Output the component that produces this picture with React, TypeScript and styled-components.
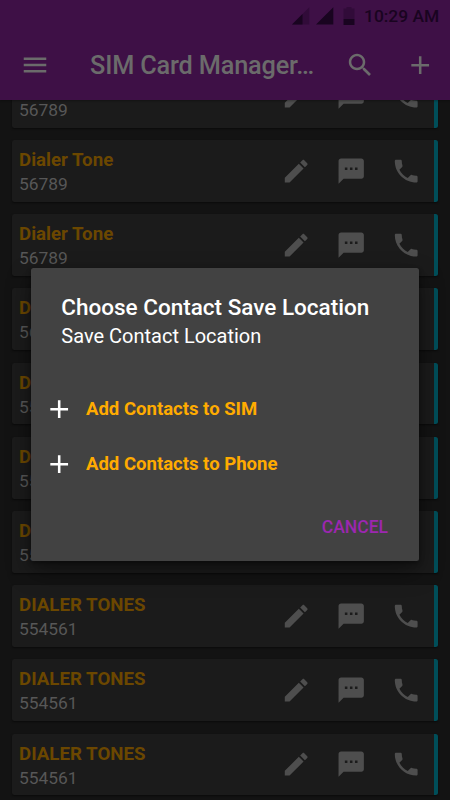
import React from "react";
import styled, { createGlobalStyle } from "styled-components";

const GlobalStyle = createGlobalStyle`
  * { box-sizing: border-box; }
  body { margin: 0; background: #131313; font-family: Roboto, "Liberation Sans", sans-serif; }
`;

const Screen = styled.div`
  position: relative;
  width: 450px;
  height: 800px;
  overflow: hidden;
  display: flex;
  flex-direction: column;
  background: #131313;
`;

const Header = styled.header`
  position: relative;
  z-index: 1;
  flex: 0 0 100px;
  background: #3e1046;
  box-shadow: 0 1px 2px rgba(0, 0, 0, 0.3);
`;

const StatusBar = styled.div`
  display: flex;
  align-items: center;
  height: 31px;
  padding-left: 291.5px;
  color: #190420;
`;

const StatusIcon = styled.svg<{ $gap: number }>`
  flex: none;
  margin-right: ${(p) => p.$gap}px;
`;

const Clock = styled.span`
  font-size: 17.4px;
  font-weight: 500;
  line-height: 20px;
  white-space: nowrap;
`;

const Toolbar = styled.div`
  display: flex;
  align-items: center;
  height: 68px;
  padding: 0 15px 0 20px;
  color: #6b6b6b;
`;

const Title = styled.h1`
  flex: 0 0 254px;
  margin: 0;
  padding: 1px 0 0 40px;
  font-size: 25.3px;
  font-weight: 500;
  letter-spacing: -0.17px;
  line-height: 32px;
  white-space: nowrap;
`;

const ToolGap = styled.span<{ $width: number }>`
  flex: 0 0 ${(p) => p.$width}px;
`;

const List = styled.main`
  flex: 1;
  display: flex;
  flex-direction: column;
  gap: 12.4px;
  margin-top: -34.2px;
  padding: 0 12.4px;
`;

const Card = styled.article`
  flex: 0 0 61.8px;
  display: flex;
  align-items: flex-start;
  padding-left: 6.6px;
  background: #1b1b1b;
  border-right: 4px solid #004e59;
  border-radius: 2.5px;
  box-shadow: 0 1px 2px rgba(0, 0, 0, 0.5);
`;

const Details = styled.div`
  flex: 1;
  padding-top: 9px;
`;

const Name = styled.div`
  color: #6b4700;
  font-size: 18.7px;
  font-weight: 700;
  line-height: 22px;
`;

const PhoneNumber = styled.div`
  margin-top: 3px;
  color: #575757;
  font-size: 17.4px;
  line-height: 21px;
`;

const Actions = styled.div`
  display: flex;
  gap: 24.6px;
  padding: 15.5px 12px 0 0;
  color: #4e4e4e;
`;

const Glyph = styled.svg`
  display: block;
  flex: none;
  fill: currentColor;
`;

const Dialog = styled.section`
  position: absolute;
  z-index: 2;
  left: 31px;
  top: 268px;
  width: 387.5px;
  height: 293.3px;
  display: flex;
  flex-direction: column;
  background: #424242;
  border-radius: 2.5px;
  box-shadow: 0 10px 24px rgba(0, 0, 0, 0.42), 0 2px 5px rgba(0, 0, 0, 0.4);
`;

const DialogTitle = styled.h2`
  margin: 24.5px 0 0 30.3px;
  color: #fff;
  font-size: 22.5px;
  font-weight: 500;
  line-height: 29px;
`;

const DialogText = styled.p`
  margin: 1px 0 0 30.3px;
  color: #fff;
  font-size: 20px;
  line-height: 26px;
`;

const Options = styled.div`
  margin-top: 33px;
`;

const Option = styled.div`
  display: flex;
  align-items: center;
  gap: 12px;
  height: 55px;
  padding-left: 12.6px;
  color: #fff;
`;

const OptionLabel = styled.span`
  color: #ffab00;
  font-size: 18.55px;
  font-weight: 700;
  line-height: 24px;
`;

const Cancel = styled.button`
  align-self: flex-end;
  margin: 22px 30.5px 0 0;
  padding: 0;
  border: 0;
  background: none;
  color: #9c27b0;
  font: 500 17.5px/26px Roboto, "Liberation Sans", sans-serif;
`;

const paths = {
  menu: "M3 18h18v-2H3v2zm0-5h18v-2H3v2zm0-7v2h18V6H3z",
  search:
    "M15.5 14h-.79l-.28-.27C15.41 12.59 16 11.11 16 9.5 16 5.91 13.09 3 9.5 3S3 5.91 3 9.5 5.91 16 9.5 16c1.61 0 3.09-.59 4.23-1.57l.27.28v.79l5 4.99L20.49 19l-4.99-5zm-6 0C7.01 14 5 11.99 5 9.5S7.01 5 9.5 5 14 7.01 14 9.5 11.99 14 9.5 14z",
  add: "M19 13h-6v6h-2v-6H5v-2h6V5h2v6h6v2z",
  edit: "M3 17.25V21h3.75L17.81 9.94l-3.75-3.75L3 17.25zM20.71 7.04c.39-.39.39-1.02 0-1.41l-2.34-2.34c-.39-.39-1.02-.39-1.41 0l-1.83 1.83 3.75 3.75 1.83-1.83z",
  sms: "M20 2H4c-1.1 0-1.99.9-1.99 2L2 22l4-4h14c1.1 0 2-.9 2-2V4c0-1.1-.9-2-2-2zM9 11H7V9h2v2zm4 0h-2V9h2v2zm4 0h-2V9h2v2z",
  call: "M6.62 10.79c1.44 2.83 3.76 5.14 6.59 6.59l2.2-2.2c.27-.27.67-.36 1.02-.24 1.12.37 2.33.57 3.57.57.55 0 1 .45 1 1V20c0 .55-.45 1-1 1-9.39 0-17-7.61-17-17 0-.55.45-1 1-1h3.5c.55 0 1 .45 1 1 0 1.25.2 2.45.57 3.57.11.35.03.74-.25 1.02l-2.2 2.2z",
};

function Icon({ name, size = 30.4 }: { name: keyof typeof paths; size?: number }) {
  return (
    <Glyph width={size} height={size} viewBox="0 0 24 24">
      <path d={paths[name]} />
    </Glyph>
  );
}

const contacts = [
  ...Array.from({ length: 4 }, () => ({ name: "Dialer Tone", number: "56789" })),
  ...Array.from({ length: 6 }, () => ({ name: "DIALER TONES", number: "554561" })),
];

export default function App() {
  return (
    <>
      <GlobalStyle />
      <Screen>
        <Header>
          <StatusBar>
            <StatusIcon $gap={6} width="18" height="18" viewBox="0 0 18 18">
              <path d="M0 17.5 17.3 0.3V17.5Z" fill="#310b39" />
              <path d="M0 17.5 10.5 7V17.5Z" fill="#190420" />
            </StatusIcon>
            <StatusIcon $gap={9.5} width="18" height="18" viewBox="0 0 18 18">
              <path d="M0 17.5 17.3 0.3V17.5Z" fill="#190420" />
            </StatusIcon>
            <StatusIcon $gap={9} width="12" height="18" viewBox="0 0 12 18">
              <path d="M3.5 0h5v1.5h3V12H.5V1.5h3Z" fill="#310b39" />
              <path d="M.5 12h11v6H.5Z" fill="#190420" />
            </StatusIcon>
            <Clock>10:29 AM</Clock>
          </StatusBar>
          <Toolbar>
            <Icon name="menu" size={30} />
            <Title>SIM Card Manager…</Title>
            <ToolGap $width={31} />
            <Icon name="search" />
            <ToolGap $width={29.4} />
            <Icon name="add" />
          </Toolbar>
        </Header>
        <List>
          {contacts.map((contact, index) => (
            <Card key={index}>
              <Details>
                <Name>{contact.name}</Name>
                <PhoneNumber>{contact.number}</PhoneNumber>
              </Details>
              <Actions>
                <Icon name="edit" />
                <Icon name="sms" />
                <Icon name="call" />
              </Actions>
            </Card>
          ))}
        </List>
        <Dialog role="dialog" aria-label="Choose Contact Save Location">
          <DialogTitle>Choose Contact Save Location</DialogTitle>
          <DialogText>Save Contact Location</DialogText>
          <Options>
            <Option>
              <Icon name="add" />
              <OptionLabel>Add Contacts to SIM</OptionLabel>
            </Option>
            <Option>
              <Icon name="add" />
              <OptionLabel>Add Contacts to Phone</OptionLabel>
            </Option>
          </Options>
          <Cancel>CANCEL</Cancel>
        </Dialog>
      </Screen>
    </>
  );
}
